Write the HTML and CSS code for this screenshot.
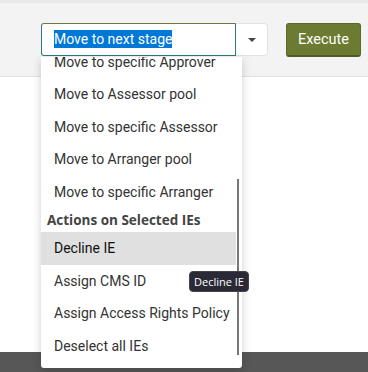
FILE: index.html
```html
<!DOCTYPE html>
<html lang="en">
<head>
  <meta charset="UTF-8" />
  <title>Bulk actions</title>
  <link rel="stylesheet" href="styles.css">
</head>
<body>
  <div id="toolbar">
    <div class="select-group">
      <div class="select-input"><span class="selected-text">Move to next stage</span></div>
      <div class="select-toggle"><span class="caret"></span></div>
    </div>
    <button class="execute-btn">Execute</button>
  </div>

  <div id="main"></div>
  <div id="footer"></div>

  <div id="action-menu">
    <ul class="menu-list">
      <li class="menu-item">Move to specific Approver</li>
      <li class="menu-item">Move to Assessor pool</li>
      <li class="menu-item">Move to specific Assessor</li>
      <li class="menu-item">Move to Arranger pool</li>
      <li class="menu-item">Move to specific Arranger</li>
      <li class="menu-header">Actions on Selected IEs</li>
      <li class="menu-item active">Decline IE</li>
      <li class="menu-item">Assign CMS ID</li>
      <li class="menu-item">Assign Access Rights Policy</li>
      <li class="menu-item">Deselect all IEs</li>
    </ul>
    <div class="scroll-thumb"></div>
  </div>

  <div class="tooltip">Decline IE</div>
</body>
</html>
```

FILE: styles.css
```css
html {
  font-size: 16px;
}
body {
  margin: 0;
  font-family: Roboto, "Liberation Sans", sans-serif;
  background-color: #fff;
  color: #333;
  height: 372px;
  overflow: hidden;
  display: flex;
  flex-direction: column;
}
#toolbar {
  height: 77px;
  background-color: #f3f3f3;
  border-top: 3px solid #e8e8e8;
  border-bottom: 1px solid #e0e0e0;
  display: flex;
  align-items: flex-start;
  padding: 20px 7px 0 41px;
  box-sizing: border-box;
  gap: 18px;
}
.select-group {
  display: flex;
}
.select-input {
  width: 195px;
  height: 33px;
  box-sizing: border-box;
  background: #fff;
  border: 1px solid #2b7b74;
  border-top-color: #6b7b3a;
  border-radius: 3px 0 0 3px;
  padding: 6px 12px;
  font-size: 14px;
  line-height: 19px;
}
.selected-text {
  background: #0078d7;
  color: #fff;
  padding: 1px 0;
}
.select-toggle {
  width: 32px;
  height: 33px;
  box-sizing: border-box;
  background: #fff;
  border: 1px solid #e2e2e2;
  border-left: none;
  border-radius: 0 4px 4px 0;
  display: flex;
  align-items: center;
  justify-content: center;
}
.caret {
  width: 0;
  height: 0;
  border-left: 4px solid transparent;
  border-right: 4px solid transparent;
  border-top: 4px solid #444;
}
.execute-btn {
  margin-left: auto;
  width: 75px;
  height: 34px;
  background-color: #6b7b32;
  border: 1px solid #5a6828;
  border-bottom: 2px solid #4f5c22;
  border-radius: 3px;
  color: #fff;
  font-family: Roboto, "Liberation Sans", sans-serif;
  font-size: 14.5px;
  padding: 0;
}
#main {
  flex: 1;
}
#footer {
  height: 20px;
  background-color: #575757;
}
#action-menu {
  position: absolute;
  left: 41px;
  top: 57px;
  width: 201px;
  height: 311px;
  background: #fff;
  border-radius: 0 0 3px 3px;
  box-shadow: 0 3px 10px rgba(0, 0, 0, 0.18);
  overflow: hidden;
}
.menu-list {
  list-style: none;
  margin: -11.25px 0 0;
  padding: 0;
}
.menu-item {
  height: 32.5px;
  line-height: 32.5px;
  padding-left: 13px;
  font-size: 14px;
  color: #333;
  white-space: nowrap;
}
.menu-item.active {
  background-color: #e0e0e0;
  color: #111;
  margin-right: 6px;
}
.menu-header {
  height: 24px;
  line-height: 25px;
  padding-left: 6px;
  font-family: "Open Sans", sans-serif;
  font-size: 13.5px;
  font-weight: bold;
  color: #444;
  white-space: nowrap;
}
.scroll-thumb {
  position: absolute;
  left: 196px;
  top: 122px;
  width: 2px;
  height: 176px;
  background: #777;
}
.tooltip {
  position: absolute;
  left: 189px;
  top: 271px;
  height: 21px;
  padding: 0 4px;
  background: #2a2a36;
  border: 1px solid #444;
  border-radius: 4px;
  color: #fff;
  font-family: "Open Sans", sans-serif;
  font-size: 11px;
  line-height: 19px;
  box-sizing: border-box;
}
```
